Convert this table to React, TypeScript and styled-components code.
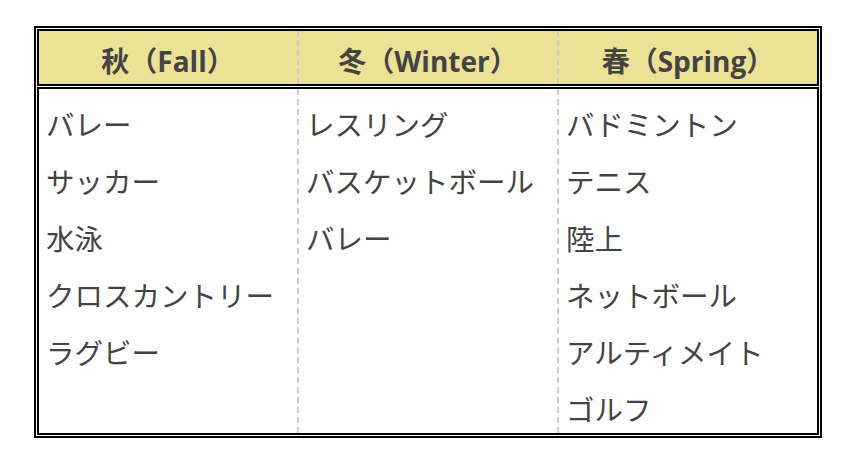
import styled, {createGlobalStyle} from "styled-components";

const GlobalStyle = createGlobalStyle`
  html, body {
    margin: 0;
    padding: 0;
    background: #fff;
  }
`;

interface Season {
    name: string,
    sports: string[],
}

const SEASONS: Season[] = [
    {name: '秋（Fall）', sports: ['バレー', 'サッカー', '水泳', 'クロスカントリー', 'ラグビー']},
    {name: '冬（Winter）', sports: ['レスリング', 'バスケットボール', 'バレー']},
    {name: '春（Spring）', sports: ['バドミントン', 'テニス', '陸上', 'ネットボール', 'アルティメイト', 'ゴルフ']},
];

const Page = styled.div`
  padding: 26px 34px;
`;

const Frame = styled.div`
  width: 788px;
  box-sizing: border-box;
  border: 2px solid #000;
  padding: 1px;
  display: flex;
  flex-direction: column;
  gap: 1px;
`;

const Band = styled.div<{ $head?: boolean }>`
  display: grid;
  grid-template-columns: 258px 260px 1fr;
  border: 2px solid #000;
  background: ${p => p.$head ? '#ebe295' : '#fff'};
`;

const HeadCell = styled.div<{ $first?: boolean }>`
  border-left: ${p => p.$first ? 'none' : '2px dashed #ccc'};
  box-sizing: border-box;
  height: 53px;
  padding-top: 7px;
  line-height: 46px;
  text-align: center;
  font-family: "Open Sans", "Noto Sans CJK JP", sans-serif;
  font-weight: 700;
  font-size: 28px;
  color: #444;
`;

const Column = styled.div<{ $first?: boolean }>`
  border-left: ${p => p.$first ? 'none' : '2px dashed #ccc'};
  display: flex;
  flex-direction: column;
  gap: 17px;
  padding: 15px 0 4px 7px;
`;

const Item = styled.div`
  font-family: "Noto Sans CJK JP", sans-serif;
  font-size: 28.5px;
  line-height: 40px;
  color: #444;
  white-space: nowrap;
`;

const App = () => {
    return (
        <Page>
            <GlobalStyle/>
            <Frame>
                <Band $head>
                    {SEASONS.map((s, i) =>
                        <HeadCell key={s.name} $first={i === 0}>{s.name}</HeadCell>
                    )}
                </Band>
                <Band>
                    {SEASONS.map((s, i) =>
                        <Column key={s.name} $first={i === 0}>
                            {s.sports.map(sp => <Item key={sp}>{sp}</Item>)}
                        </Column>
                    )}
                </Band>
            </Frame>
        </Page>
    )
}

export default App
